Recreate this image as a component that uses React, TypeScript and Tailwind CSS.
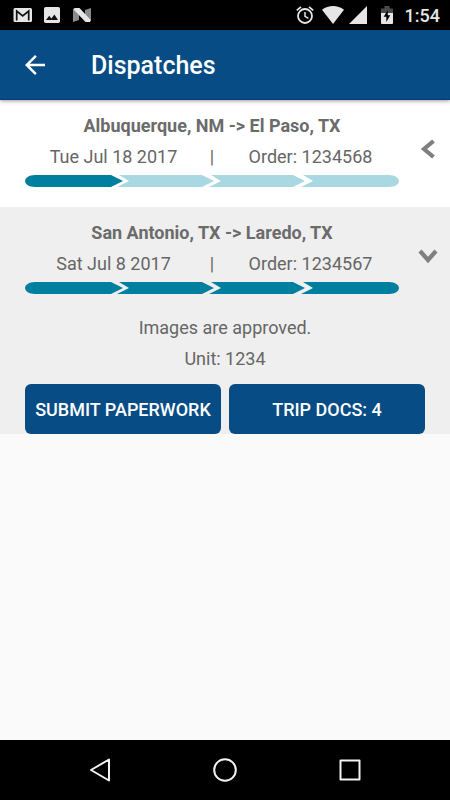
import { useState } from 'react';

const STEPS = [
  'M10 0H86L98 6L86 12H10C4 12 0 9 0 6S4 0 10 0Z',
  'M94 0H177L189 6L177 12H92L104 6Z',
  'M186 0H268L280 6L268 12H184L196 6Z',
  'M278 0H364C370 0 374 3 374 6S370 12 364 12H276L288 6Z',
];

function ProgressBar({ done }: { done: number }) {
  return (
    <svg
      className="block h-3 w-full"
      viewBox="0 0 374 12"
      preserveAspectRatio="none"
      role="img"
      aria-label={`${done} of 4 steps complete`}
    >
      {STEPS.map((d, i) => (
        <path key={d} d={d} fill={i < done ? '#007f9f' : '#a9d7e2'} />
      ))}
    </svg>
  );
}

type Dispatch = {
  route: string;
  date: string;
  order: string;
  done: number;
  status: string;
  unit: string;
  docs: number;
};

const DISPATCHES: Dispatch[] = [
  {
    route: 'Albuquerque, NM -> El Paso, TX',
    date: 'Tue Jul 18 2017',
    order: '1234568',
    done: 1,
    status: 'In progress.',
    unit: '1234',
    docs: 0,
  },
  {
    route: 'San Antonio, TX -> Laredo, TX',
    date: 'Sat Jul 8 2017',
    order: '1234567',
    done: 4,
    status: 'Images are approved.',
    unit: '1234',
    docs: 4,
  },
];

function DispatchCard({ item, initiallyOpen }: { item: Dispatch; initiallyOpen: boolean }) {
  const [open, setOpen] = useState(initiallyOpen);
  return (
    <article className={open ? 'bg-[#efefef]' : 'bg-white'}>
      <div className="flex pl-[25px]">
        <div className="min-w-0 flex-1 pt-[10px] pb-5 text-center">
          <h2 className="text-lg leading-[31px] font-bold text-[#6b6b6b]">{item.route}</h2>
          <div className="mb-[2px] grid grid-cols-[1fr_20px_1fr] leading-8">
            <span>{item.date}</span>
            <span>|</span>
            <span>Order: {item.order}</span>
          </div>
          <ProgressBar done={item.done} />
        </div>
        <button
          type="button"
          className="flex w-[51px] items-center justify-center pb-[9px] pl-[7px]"
          aria-expanded={open}
          aria-label={open ? 'Hide details' : 'Show details'}
          onClick={() => setOpen(!open)}
        >
          <svg className="h-5 w-5" viewBox="0 0 20 20" fill="none" stroke="#7f7f7f" strokeWidth="4.2">
            <path d={open ? 'M2 5L10 14L18 5' : 'M15.5 2L6 10L15.5 18'} />
          </svg>
        </button>
      </div>
      {open && (
        <div className="px-[25px] text-center">
          <p className="mb-[3px] leading-7">{item.status}</p>
          <p className="leading-7">Unit: {item.unit}</p>
          <div className="mt-[11px] grid grid-cols-2 gap-2">
            <button type="button" className="h-[50px] rounded-md bg-[#084c86] pt-px font-medium text-white">
              SUBMIT PAPERWORK
            </button>
            <button type="button" className="h-[50px] rounded-md bg-[#084c86] pt-px font-medium text-white">
              TRIP DOCS: {item.docs}
            </button>
          </div>
        </div>
      )}
    </article>
  );
}

function StatusBar() {
  return (
    <div className="flex h-[30px] items-center justify-between bg-black pr-[10px] pl-[13px] text-[#e6e6e6]">
      <div className="flex items-center gap-3">
        <svg className="h-4 w-[19px]" viewBox="0 0 19 16">
          <rect x="0.5" y="1" width="18.5" height="14" rx="1.5" fill="#e6e6e6" />
          <path d="M3.700 13.500V4L9.700 9L15.700 4V13.500" fill="none" stroke="#111" strokeWidth="1.7" />
        </svg>
        <svg className="h-4 w-4" viewBox="0 0 16 16">
          <rect width="16" height="16" rx="1.8" fill="#e6e6e6" />
          <path d="M2 13L5.2 8.8L7.4 11.5L10.4 7.5L14 13Z" fill="#111" />
        </svg>
        <svg className="h-4 w-5" viewBox="0 0 20 16">
          <path d="M1 2L7 4V13L1 15Z M13 3L19 1V14L13 12Z" fill="#8a8a8a" />
          <path d="M1.200 2L3 1H7.500L18.800 13L18 15H13.500Z" fill="#e6e6e6" />
        </svg>
      </div>
      <div className="flex items-center">
        <svg className="h-[18px] w-[18px]" viewBox="0 0 18 18" fill="none" stroke="#e6e6e6">
          <circle cx="9" cy="10" r="7" strokeWidth="1.8" />
          <path d="M9 6V10.3L12.4 12.4" strokeWidth="1.5" />
          <path d="M0.8 4.4L5 0.9M17.2 4.4L13 0.9" strokeWidth="1.8" />
        </svg>
        <svg className="ml-2 h-[18px] w-[22px]" viewBox="0 0 22 18" fill="#e6e6e6">
          <path d="M0 3.8C6.500-1.200 15.500-1.200 22 3.800L11 18Z" />
        </svg>
        <svg className="ml-[5px] h-[18px] w-[18px]" viewBox="0 0 18 18" fill="#e6e6e6">
          <path d="M0 18L18 0V18Z" />
        </svg>
        <svg className="ml-[14px] h-[18px] w-3" viewBox="0 0 12 18">
          <path d="M0 2.500H3.500V0H8.500V2.500H12V7H0Z" fill="#4a4a4a" />
          <path d="M0 7H12V17A1 1 0 0 1 11 18H1A1 1 0 0 1 0 17Z" fill="#e6e6e6" />
          <path d="M6.800 4L2.700 10.800H5.300V16L9.300 9.300H6.800Z" fill="#000" />
        </svg>
        <time className="ml-3 pt-px text-lg leading-[30px] font-medium">1:54</time>
      </div>
    </div>
  );
}

export default function App() {
  return (
    <div className="flex min-h-screen flex-col bg-[#fafafa] font-['Roboto','Liberation_Sans',sans-serif] text-lg text-[#666666]">
      <StatusBar />
      <header className="relative flex h-[70px] items-center border-b border-[#083a78] bg-[#084c86] pl-5 text-white shadow-[0_1px_4px_rgba(0,0,0,0.4)]">
        <button type="button" aria-label="Back" className="h-[30px] w-[30px]">
          <svg viewBox="0 0 24 24" fill="currentColor">
            <path d="M20 11H7.830l5.590-5.590L12 4l-8 8 8 8 1.410-1.410L7.830 13H20v-2z" />
          </svg>
        </button>
        <h1 className="ml-[41px] pt-1 text-[25px] font-medium">Dispatches</h1>
      </header>
      <main className="flex-1">
        {DISPATCHES.map((item, i) => (
          <DispatchCard key={item.order} item={item} initiallyOpen={i === 1} />
        ))}
      </main>
      <nav className="flex h-[60px] items-center justify-center gap-[75px] bg-black" aria-label="System">
        <button type="button" aria-label="Back" className="flex w-[50px] justify-center">
          <svg className="h-[26px] w-[26px]" viewBox="0 0 26 26" fill="none" stroke="#f2f2f2" strokeWidth="2" strokeLinejoin="round">
            <path d="M22 2.500V23.500L4 13Z" />
          </svg>
        </button>
        <button type="button" aria-label="Home" className="flex w-[50px] justify-center">
          <svg className="h-[26px] w-[26px]" viewBox="0 0 26 26" fill="none" stroke="#f2f2f2" strokeWidth="2">
            <circle cx="13" cy="13" r="10.800" />
          </svg>
        </button>
        <button type="button" aria-label="Overview" className="flex w-[50px] justify-center">
          <svg className="h-[26px] w-[26px]" viewBox="0 0 26 26" fill="none" stroke="#f2f2f2" strokeWidth="2" strokeLinejoin="round">
            <rect x="3.500" y="3.500" width="19" height="19" />
          </svg>
        </button>
      </nav>
    </div>
  );
}
